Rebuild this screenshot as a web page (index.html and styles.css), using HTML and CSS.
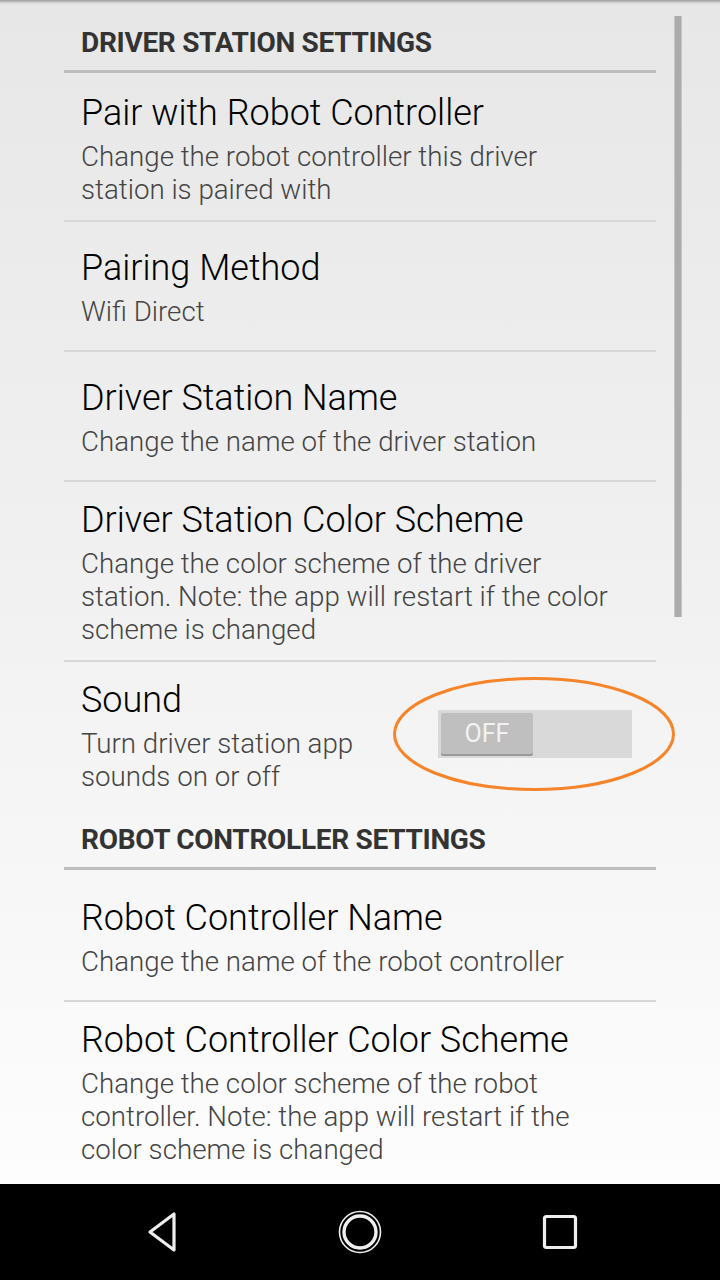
FILE: index.html
```html
<!DOCTYPE html>
<html>
<head>
<meta charset="utf-8">
<link rel="stylesheet" href="styles.css">
</head>
<body>
<div class="screen">
  <div class="content">
    <div class="top-shadow"></div>
    <div class="list">
      <div class="category">DRIVER STATION SETTINGS</div>
      <div class="item">
        <div class="title">Pair with Robot Controller</div>
        <div class="summary">Change the robot controller this driver station is paired with</div>
      </div>
      <div class="item">
        <div class="title">Pairing Method</div>
        <div class="summary">Wifi Direct</div>
      </div>
      <div class="item">
        <div class="title">Driver Station Name</div>
        <div class="summary">Change the name of the driver station</div>
      </div>
      <div class="item">
        <div class="title">Driver Station Color Scheme</div>
        <div class="summary">Change the color scheme of the driver station. Note: the app will restart if the color scheme is changed</div>
      </div>
      <div class="item item-row last">
        <div class="text-col">
          <div class="title">Sound</div>
          <div class="summary">Turn driver station app sounds on or off</div>
        </div>
        <div class="switch">
          <div class="thumb">OFF</div>
        </div>
      </div>
      <div class="category">ROBOT CONTROLLER SETTINGS</div>
      <div class="item">
        <div class="title">Robot Controller Name</div>
        <div class="summary">Change the name of the robot controller</div>
      </div>
      <div class="item last">
        <div class="title">Robot Controller Color Scheme</div>
        <div class="summary">Change the color scheme of the robot controller. Note: the app will restart if the color scheme is changed</div>
      </div>
    </div>
    <div class="scrollbar"></div>
    <svg class="annotation" width="284" height="116" viewBox="0 0 284 116">
      <ellipse cx="142" cy="58" rx="139.5" ry="55.5" fill="none" stroke="#f5842b" stroke-width="3"/>
    </svg>
  </div>
  <div class="navbar">
    <svg class="nav-icon" width="48" height="48" viewBox="0 0 48 48">
      <path d="M38 6 L38 42 L14 24 Z" fill="none" stroke="#eeeeee" stroke-width="3.2" stroke-linejoin="round"/>
    </svg>
    <svg class="nav-icon" width="48" height="48" viewBox="0 0 48 48">
      <circle cx="24" cy="24" r="20.5" fill="none" stroke="#eeeeee" stroke-width="1.6"/>
      <circle cx="24" cy="24" r="16" fill="none" stroke="#eeeeee" stroke-width="3.4"/>
    </svg>
    <svg class="nav-icon" width="48" height="48" viewBox="0 0 48 48">
      <rect x="8.5" y="8.5" width="31" height="31" rx="2" fill="none" stroke="#eeeeee" stroke-width="3.2"/>
    </svg>
  </div>
</div>
</body>
</html>
```
FILE: styles.css
```css
* { box-sizing: border-box; }
html, body { margin: 0; padding: 0; }
body {
  width: 720px;
  height: 1280px;
  overflow: hidden;
  font-family: Roboto, "Noto Sans", sans-serif;
  background: #000;
}
.screen {
  width: 720px;
  height: 1280px;
  display: flex;
  flex-direction: column;
}
.content {
  position: relative;
  flex: 1;
  overflow: hidden;
  background: linear-gradient(to bottom, #e7e7e7 0%, #f1f1f1 50%, #fdfdfd 100%);
}
.top-shadow {
  position: absolute;
  left: 0; right: 0; top: 0;
  height: 5px;
  background: linear-gradient(to bottom, rgba(0,0,0,0.32), rgba(0,0,0,0.06) 60%, rgba(0,0,0,0));
}
.list {
  margin: 0 64px;
  padding-top: 10px;
}
.category {
  padding: 16px 17px 10px;
  line-height: 34px;
  font-size: 28px;
  font-weight: 700;
  color: #333333;
  border-bottom: 3px solid #bdbdbd;
  margin-bottom: 2px;
  letter-spacing: -0.3px;
}
.item {
  min-height: 130px;
  padding: 16px 35px 14px 17px;
  display: flex;
  flex-direction: column;
  justify-content: center;
  border-bottom: 2px solid #d7d7d7;
}
.item.last { border-bottom: none; min-height: 128px; }
.item-row {
  flex-direction: row;
  align-items: center;
  justify-content: space-between;
  padding-right: 24px;
}
.text-col { width: 320px; }
.title {
  font-size: 36px;
  line-height: 44px;
  color: #000000;
  font-weight: 300;
}
.summary {
  margin-top: 5px;
  font-size: 27.7px;
  line-height: 33px;
  color: #444444;
  font-weight: 300;
}
.switch {
  width: 194px;
  height: 48px;
  background: #d9d9d9;
  padding: 3px;
  margin-top: -4px;
}
.thumb {
  width: 92px;
  height: 41px;
  background: #bfbfbf;
  border-radius: 2px;
  box-shadow: 0 2px 0 #9a9a9a;
  color: #f2f2f2;
  font-size: 25px;
  line-height: 41px;
  text-align: center;
}
.scrollbar {
  position: absolute;
  left: 674px;
  top: 16px;
  width: 8px;
  height: 601px;
  background: #ababab;
  border-left: 1px solid #c6c6c6;
  border-right: 1px solid #c6c6c6;
}
.annotation {
  position: absolute;
  left: 392px;
  top: 676px;
}
.navbar {
  height: 96px;
  background: #000;
  display: flex;
  align-items: center;
  justify-content: space-between;
  padding: 0 136px;
}
.nav-icon { display: block; }
```
